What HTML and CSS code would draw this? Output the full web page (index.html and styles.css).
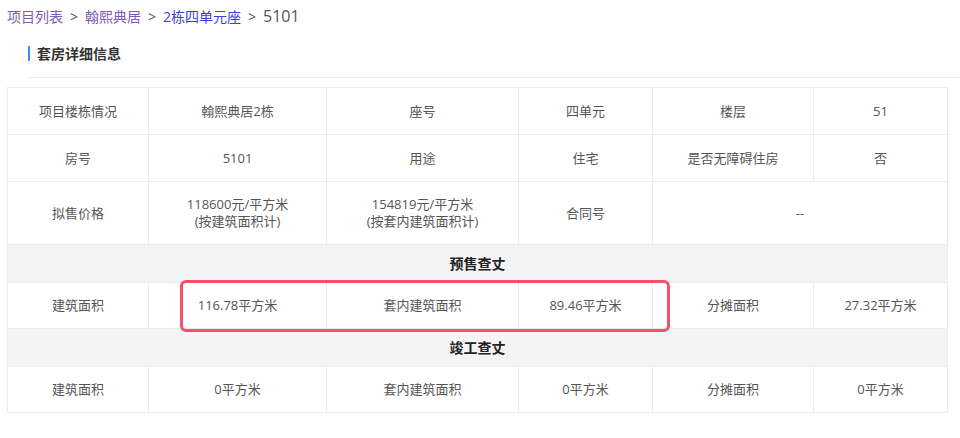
FILE: index.html
```html
<!DOCTYPE html>
<html lang="zh">
<head>
<meta charset="utf-8">
<link rel="stylesheet" href="styles.css">
</head>
<body>
<div class="crumb">
  <a class="visited" href="#">项目列表</a><span class="sep">&gt;</span><a class="visited" href="#">翰熙典居</a><span class="sep">&gt;</span><a class="link" href="#">2栋四单元座</a><span class="sep">&gt;</span><span class="current">5101</span>
</div>
<div class="section">
  <div class="title"><span class="bar"></span><span class="title-text">套房详细信息</span></div>
</div>
<div class="table-wrap">
  <table class="info">
    <colgroup>
      <col class="c1"><col class="c2"><col class="c3"><col class="c4"><col class="c5"><col class="c6">
    </colgroup>
    <tr class="r47">
      <td>项目楼栋情况</td><td>翰熙典居2栋</td><td>座号</td><td>四单元</td><td>楼层</td><td>51</td>
    </tr>
    <tr class="r47">
      <td>房号</td><td>5101</td><td>用途</td><td>住宅</td><td>是否无障碍住房</td><td>否</td>
    </tr>
    <tr class="r63">
      <td>拟售价格</td>
      <td>118600元/平方米<br>(按建筑面积计)</td>
      <td>154819元/平方米<br>(按套内建筑面积计)</td>
      <td>合同号</td>
      <td colspan="2">--</td>
    </tr>
    <tr class="head">
      <td colspan="6">预售查丈</td>
    </tr>
    <tr class="r46">
      <td>建筑面积</td><td>116.78平方米</td><td>套内建筑面积</td><td>89.46平方米</td><td>分摊面积</td><td>27.32平方米</td>
    </tr>
    <tr class="head">
      <td colspan="6">竣工查丈</td>
    </tr>
    <tr class="r46">
      <td>建筑面积</td><td>0平方米</td><td>套内建筑面积</td><td>0平方米</td><td>分摊面积</td><td>0平方米</td>
    </tr>
  </table>
  <div class="highlight"></div>
</div>
</body>
</html>
```
FILE: styles.css
```css
html, body {
  margin: 0;
  padding: 0;
  background: #fff;
}
body {
  font-family: "Open Sans", "Noto Sans CJK SC", sans-serif;
  color: #555;
}
.crumb {
  height: 32px;
  line-height: 32px;
  padding-left: 7px;
  font-size: 14px;
  color: #555;
  white-space: nowrap;
}
.crumb a {
  text-decoration: none;
}
.crumb .visited {
  color: #7d5ab5;
}
.crumb .link {
  color: #3d3de6;
}
.crumb .sep {
  color: #555;
  margin: 0 7px;
}
.crumb .current {
  color: #555;
  font-size: 16px;
}
.section {
  margin-left: 28px;
}
.title {
  height: 42px;
  padding-bottom: 3px;
  display: flex;
  align-items: center;
  border-bottom: 1px solid #e8e8e8;
}
.bar {
  width: 2px;
  height: 15px;
  background: #3d8bff;
  margin-right: 7px;
}
.title-text {
  font-size: 14px;
  font-weight: bold;
  color: #333;
}
.table-wrap {
  position: relative;
  margin-top: 9px;
  margin-left: 7px;
  width: 940px;
}
.info {
  width: 940px;
  border-collapse: collapse;
  table-layout: fixed;
  font-size: 13px;
  color: #555;
}
.info td {
  border: 1px solid #ececec;
  text-align: center;
  padding: 0 4px;
  line-height: 17px;
}
.c1 { width: 141px; }
.c2 { width: 178px; }
.c3 { width: 192px; }
.c4 { width: 134px; }
.c5 { width: 161px; }
.c6 { width: 134px; }
.r47 td { height: 46px; }
.r63 td { height: 62px; }
.r46 td { height: 45px; }
.head td {
  height: 37px;
  background: #f4f4f4;
  font-weight: bold;
  font-size: 14px;
  color: #222;
}
.highlight {
  position: absolute;
  left: 173px;
  top: 193px;
  width: 484px;
  height: 46px;
  border: 3px solid #f5506a;
  border-radius: 6px;
}
```
